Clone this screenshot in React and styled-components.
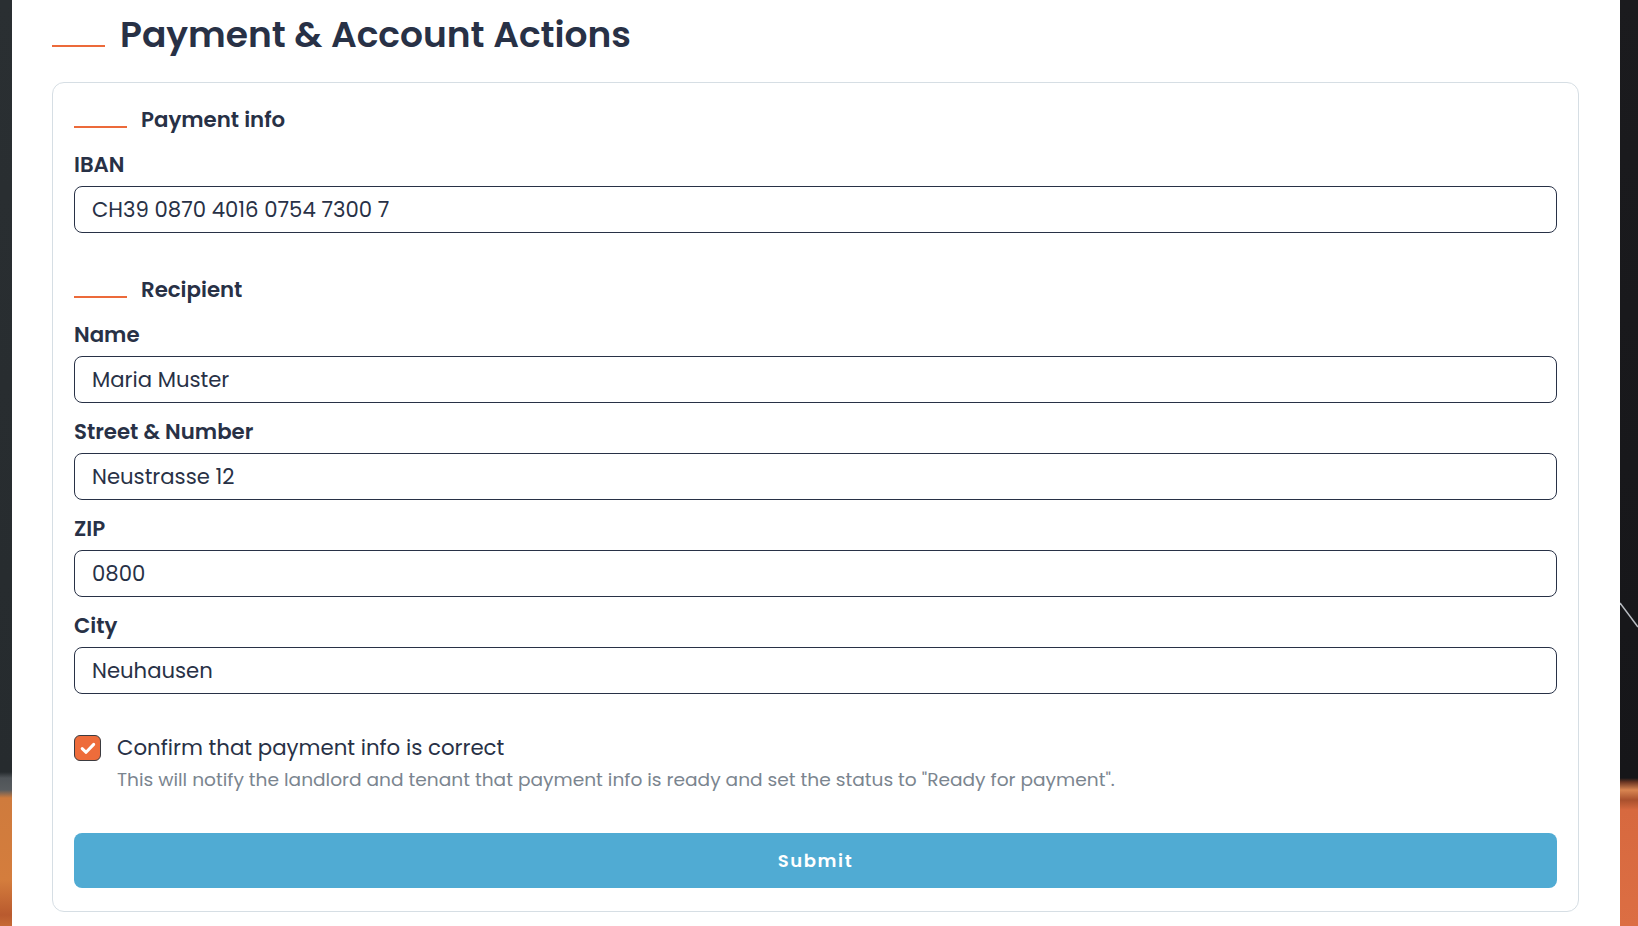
import React, { useState } from 'react'
import styled, { createGlobalStyle } from 'styled-components'

const GlobalStyle = createGlobalStyle`
    html, body {
        margin: 0;
        padding: 0;
        height: 100%;
        overflow: hidden;
        background: #1d1f22;
    }
    body {
        font-family: "Poppins", "Inter", "Noto Sans", sans-serif;
        color: #283146;
    }
    * {
        box-sizing: border-box;
    }
`;

const Screen = styled.div`
    display: flex;
    height: 926px;
`;

const LeftEdge = styled.div`
    width: 12px;
    flex-shrink: 0;
    background: linear-gradient(
        to bottom,
        #2a2f32 0px,
        #262b2e 772px,
        #4f5458 778px,
        #585c5f 790px,
        #cf7b3d 798px,
        #d47d3d 880px,
        #b95a2e 915px,
        #c66a35 926px
    );
`;

const RightEdge = styled.div`
    width: 18px;
    flex-shrink: 0;
    background: linear-gradient(
        to bottom,
        #1b1b1e 0px,
        #161619 778px,
        #6a3522 782px,
        #d88551 790px,
        #a9502d 800px,
        #d7693f 810px,
        #dc6e43 926px
    );
    svg {
        display: block;
    }
`;

const Main = styled.main`
    flex: 1;
    background: #ffffff;
    padding: 13px 41px 0 40px;
`;

const Title = styled.h1`
    display: flex;
    align-items: flex-end;
    gap: 15px;
    margin: 0 0 25px;
    font-size: 36px;
    line-height: 44px;
    font-weight: 600;
    color: #283146;
    &::before {
        content: '';
        width: 53px;
        height: 2px;
        margin-bottom: 10px;
        background: #ec6a3a;
        flex-shrink: 0;
    }
`;

const Card = styled.form`
    border: 1px solid #d6dee4;
    border-radius: 12px;
    padding: 22px 21px 23px;
    display: flex;
    flex-direction: column;
`;

const Section = styled.section`
    display: flex;
    flex-direction: column;
    gap: 15px;
    margin-bottom: ${p => p.$last ? '40px' : '42px'};
`;

const SectionHeading = styled.h2`
    display: flex;
    align-items: flex-end;
    gap: 14px;
    margin: 0 0 1px;
    font-size: 21.3px;
    line-height: 30px;
    font-weight: 600;
    color: #283146;
    &::before {
        content: '';
        width: 53px;
        height: 2px;
        margin-bottom: 7px;
        background: #ec6a3a;
        flex-shrink: 0;
    }
`;

const Field = styled.label`
    display: flex;
    flex-direction: column;
    gap: 7px;
`;

const FieldName = styled.span`
    font-size: 21.3px;
    line-height: 28px;
    font-weight: 600;
    color: #283146;
`;

const TextInput = styled.input`
    height: 47px;
    width: 100%;
    border: 1px solid #283146;
    border-radius: 8px;
    padding: 0 17px;
    font-family: inherit;
    font-size: 21.2px;
    color: #283146;
    background: #fff;
    outline: none;
`;

const ConfirmRow = styled.label`
    display: flex;
    align-items: flex-start;
    gap: 16px;
    margin-bottom: 40px;
    cursor: pointer;
`;

const Box = styled.span`
    width: 27px;
    height: 26px;
    margin-top: 1px;
    flex-shrink: 0;
    border-radius: 6px;
    border: 1px solid #3b3b40;
    background: ${p => p.$checked ? '#ee6c3b' : '#fff'};
    display: flex;
    align-items: center;
    justify-content: center;
`;

const ConfirmText = styled.span`
    display: flex;
    flex-direction: column;
    gap: 5px;
`;

const ConfirmTitle = styled.span`
    font-size: 21.3px;
    line-height: 28px;
    color: #283146;
`;

const Hint = styled.span`
    font-size: 18.6px;
    line-height: 26px;
    color: #7b858f;
`;

const SubmitButton = styled.button`
    height: 55px;
    width: 100%;
    border: none;
    border-radius: 8px;
    background: #50abd3;
    color: #fff;
    font-family: inherit;
    font-size: 18px;
    font-weight: 600;
    letter-spacing: 1.6px;
    cursor: pointer;
`;

const fields = [
    { label: 'Name', value: 'Maria Muster' },
    { label: 'Street & Number', value: 'Neustrasse 12' },
    { label: 'ZIP', value: '0800' },
    { label: 'City', value: 'Neuhausen' },
]

const App = () => {
    const [checked, setChecked] = useState(true)

    return (
        <>
            <GlobalStyle />
            <Screen>
                <LeftEdge />
                <Main>
                    <Title>Payment &amp; Account Actions</Title>
                    <Card onSubmit={e => e.preventDefault()}>
                        <Section>
                            <SectionHeading>Payment info</SectionHeading>
                            <Field>
                                <FieldName>IBAN</FieldName>
                                <TextInput defaultValue="CH39 0870 4016 0754 7300 7" />
                            </Field>
                        </Section>
                        <Section $last>
                            <SectionHeading>Recipient</SectionHeading>
                            {fields.map(({ label, value }) => (
                                <Field key={label}>
                                    <FieldName>{label}</FieldName>
                                    <TextInput defaultValue={value} />
                                </Field>
                            ))}
                        </Section>
                        <ConfirmRow onClick={() => setChecked(!checked)}>
                            <Box $checked={checked}>
                                {checked && (
                                    <svg width="20" height="20" viewBox="0 0 20 20" fill="none">
                                        <path d="M4.2 10.6l3.9 3.7 7.6-7.9" stroke="#fff" strokeWidth="3" strokeLinecap="round" strokeLinejoin="round" />
                                    </svg>
                                )}
                            </Box>
                            <ConfirmText>
                                <ConfirmTitle>Confirm that payment info is correct</ConfirmTitle>
                                <Hint>This will notify the landlord and tenant that payment info is ready and set the status to "Ready for payment".</Hint>
                            </ConfirmText>
                        </ConfirmRow>
                        <SubmitButton type="submit">Submit</SubmitButton>
                    </Card>
                </Main>
                <RightEdge>
                    <svg width="18" height="926" viewBox="0 0 18 926">
                        <line x1="0" y1="603" x2="18" y2="627" stroke="#b9bcc2" strokeWidth="1.5" />
                    </svg>
                </RightEdge>
            </Screen>
        </>
    )
}

export default App
